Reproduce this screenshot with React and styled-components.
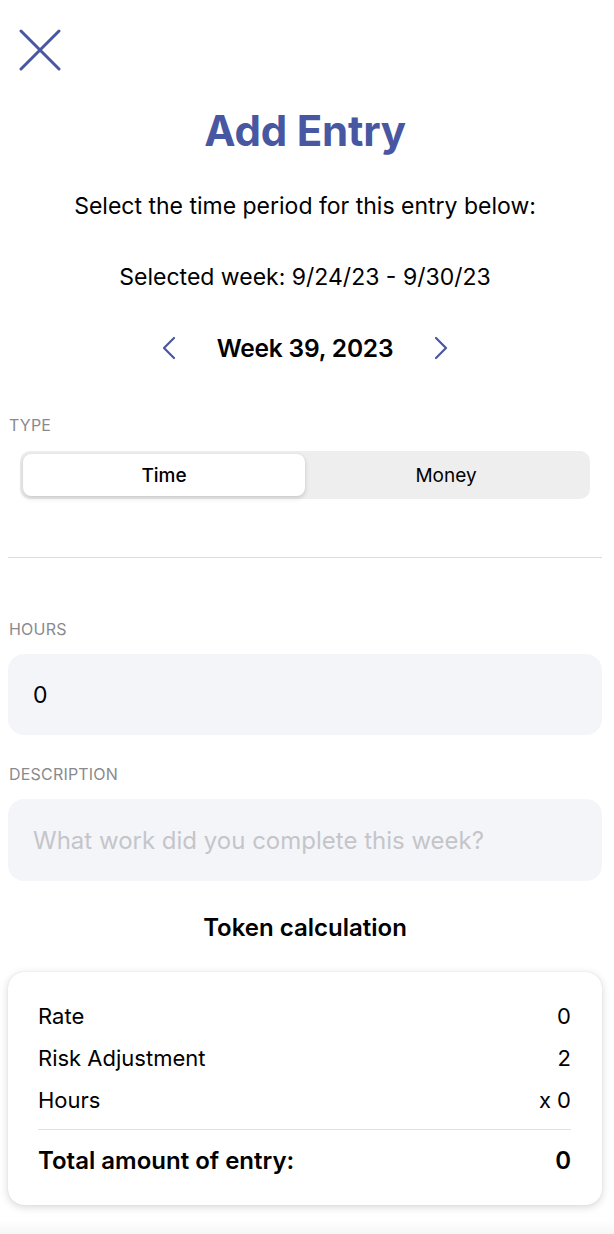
import React from "react";
import styled, { createGlobalStyle } from "styled-components";

const Global = createGlobalStyle`
  html, body { margin: 0; padding: 0; background: #ffffff; }
  body { font-family: Inter, "Noto Sans", sans-serif; color: #000; -webkit-font-smoothing: antialiased; }
  * { box-sizing: border-box; }
`;

const BLUE = "#4857a1";

const Page = styled.div`
  width: 614px;
  height: 1234px;
  overflow: hidden;
  position: relative;
  display: flex;
  flex-direction: column;
  padding: 0 12px 0 8px;
`;

const CloseButton = styled.button`
  border: 0;
  background: none;
  padding: 0;
  margin: 28px 0 0 10px;
  width: 44px;
  height: 44px;
  display: flex;
  align-items: center;
  justify-content: center;
  align-self: flex-start;
`;

const Title = styled.h1`
  margin: 34px 0 0;
  text-align: center;
  font-size: 42px;
  font-weight: 650;
  color: ${BLUE};
  letter-spacing: -0.2px;
  line-height: 50px;
`;

const Text = styled.p`
  margin: ${(p) => p.$mt || 0}px 0 0;
  text-align: center;
  font-size: 23px;
  line-height: 28px;
  font-weight: 400;
`;

const WeekRow = styled.div`
  display: flex;
  align-items: center;
  justify-content: center;
  gap: 40px;
  margin-top: 43px;
  height: 28px;
`;

const WeekLabel = styled.span`
  font-size: 24.5px;
  font-weight: 600;
  letter-spacing: -0.2px;
`;

const Chevron = styled.button`
  border: 0;
  background: none;
  padding: 0;
  width: 16px;
  height: 24px;
  display: flex;
  align-items: center;
  justify-content: center;
`;

const SectionLabel = styled.div`
  margin-top: ${(p) => p.$mt}px;
  padding-left: 1px;
  font-size: 16px;
  line-height: 20px;
  color: #8a8a8e;
  letter-spacing: 0.2px;
`;

const Segmented = styled.div`
  margin: 16px 12px 0 12px;
  height: 48px;
  background: #eeeeef;
  border-radius: 10px;
  display: grid;
  grid-template-columns: 1fr 1fr;
  padding: 3px;
`;

const Segment = styled.button`
  border: 0;
  border-radius: 8px;
  font-family: inherit;
  font-size: 19px;
  font-weight: ${(p) => (p.$active ? 500 : 400)};
  color: #000;
  background: ${(p) => (p.$active ? "#ffffff" : "transparent")};
  box-shadow: ${(p) => (p.$active ? "0 2px 5px rgba(0,0,0,0.16), 0 0 1px rgba(0,0,0,0.1)" : "none")};
`;

const Divider = styled.hr`
  border: 0;
  border-top: 1px solid #dcdcde;
  margin: ${(p) => p.$mt}px 0 0;
  width: 100%;
`;

const Field = styled.div`
  margin-top: 15px;
  height: ${(p) => (p.$placeholder ? 82 : 81)}px;
  border-radius: 16px;
  background: #f4f5f9;
  display: flex;
  align-items: center;
  padding: 0 25px;
  font-size: ${(p) => (p.$placeholder ? 24 : 23)}px;
  color: ${(p) => (p.$placeholder ? "#c5c5c9" : "#000")};
`;

const CardTitle = styled.h2`
  margin: 31px 0 0;
  text-align: center;
  font-size: 24px;
  font-weight: 600;
  line-height: 32px;
`;

const Card = styled.div`
  margin-top: 28px;
  border-radius: 16px;
  background: #fff;
  box-shadow: 0 2px 8px rgba(0, 0, 0, 0.16), 0 0 1px rgba(0, 0, 0, 0.15);
  padding: 23px 31px 16px 30px;
  display: flex;
  flex-direction: column;
`;

const Row = styled.div`
  display: flex;
  justify-content: space-between;
  align-items: center;
  height: 42px;
  font-size: 22px;
`;

const TotalRow = styled.div`
  display: flex;
  justify-content: space-between;
  align-items: center;
  border-top: 1px solid #e2e2e4;
  margin-top: 8px;
  padding-top: 2px;
  height: 60px;
  font-size: 24px;
  font-weight: 600;
`;

const BottomFade = styled.div`
  position: absolute;
  left: 0;
  right: 0;
  bottom: 0;
  height: 14px;
  background: linear-gradient(#ffffff, #f6f6f7);
`;

export default function App() {
  return (
    <>
      <Global />
      <Page>
        <CloseButton aria-label="Close">
          <svg width="42" height="42" viewBox="0 0 42 42" fill="none">
            <path d="M2 2 L40 40 M40 2 L2 40" stroke={BLUE} strokeWidth="3" strokeLinecap="round" />
          </svg>
        </CloseButton>
        <Title>Add Entry</Title>
        <Text $mt={36}>Select the time period for this entry below:</Text>
        <Text $mt={43}>Selected week: 9/24/23 - 9/30/23</Text>
        <WeekRow>
          <Chevron aria-label="Previous week">
            <svg width="14" height="24" viewBox="0 0 14 24" fill="none">
              <path d="M12 2 L2 12 L12 22" stroke={BLUE} strokeWidth="2.2" strokeLinecap="round" strokeLinejoin="round" />
            </svg>
          </Chevron>
          <WeekLabel>Week 39, 2023</WeekLabel>
          <Chevron aria-label="Next week">
            <svg width="14" height="24" viewBox="0 0 14 24" fill="none">
              <path d="M2 2 L12 12 L2 22" stroke={BLUE} strokeWidth="2.2" strokeLinecap="round" strokeLinejoin="round" />
            </svg>
          </Chevron>
        </WeekRow>
        <SectionLabel $mt={53}>TYPE</SectionLabel>
        <Segmented>
          <Segment $active>Time</Segment>
          <Segment>Money</Segment>
        </Segmented>
        <Divider $mt={58} />
        <SectionLabel $mt={61}>HOURS</SectionLabel>
        <Field>0</Field>
        <SectionLabel $mt={29}>DESCRIPTION</SectionLabel>
        <Field $placeholder>What work did you complete this week?</Field>
        <CardTitle>Token calculation</CardTitle>
        <Card>
          <Row><span>Rate</span><span>0</span></Row>
          <Row><span>Risk Adjustment</span><span>2</span></Row>
          <Row><span>Hours</span><span>x 0</span></Row>
          <TotalRow><span>Total amount of entry:</span><span>0</span></TotalRow>
        </Card>
        <BottomFade />
      </Page>
    </>
  );
}
